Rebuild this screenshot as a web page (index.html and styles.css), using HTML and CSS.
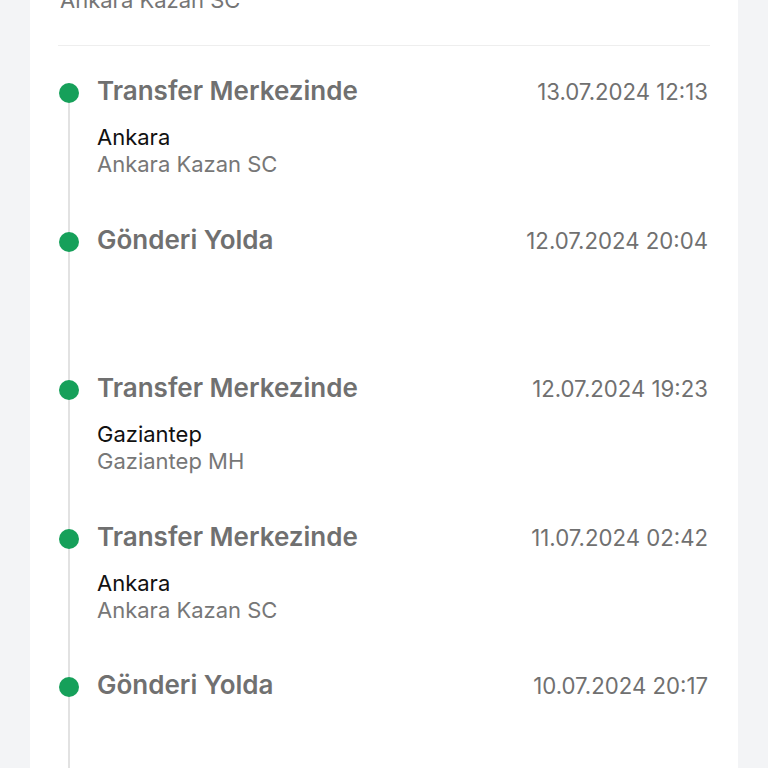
FILE: index.html
```html
<!DOCTYPE html>
<html>
<head>
<meta charset="utf-8">
<title>Gönderi Hareketleri</title>
<link rel="stylesheet" href="styles.css">
</head>
<body>
<div class="card">
  <div class="card-head">
    <div class="head-sub">Ankara Kazan SC</div>
  </div>

  <ul class="timeline">
    <li class="step">
      <span class="dot"></span>
      <div class="step-body">
        <div class="step-row">
          <span class="step-title">Transfer Merkezinde</span>
          <span class="step-date">13.07.2024 12:13</span>
        </div>
        <div class="step-city">Ankara</div>
        <div class="step-unit">Ankara Kazan SC</div>
      </div>
    </li>
    <li class="step">
      <span class="dot"></span>
      <div class="step-body">
        <div class="step-row">
          <span class="step-title">Gönderi Yolda</span>
          <span class="step-date">12.07.2024 20:04</span>
        </div>
      </div>
    </li>
    <li class="step">
      <span class="dot"></span>
      <div class="step-body">
        <div class="step-row">
          <span class="step-title">Transfer Merkezinde</span>
          <span class="step-date">12.07.2024 19:23</span>
        </div>
        <div class="step-city">Gaziantep</div>
        <div class="step-unit">Gaziantep MH</div>
      </div>
    </li>
    <li class="step">
      <span class="dot"></span>
      <div class="step-body">
        <div class="step-row">
          <span class="step-title">Transfer Merkezinde</span>
          <span class="step-date">11.07.2024 02:42</span>
        </div>
        <div class="step-city">Ankara</div>
        <div class="step-unit">Ankara Kazan SC</div>
      </div>
    </li>
    <li class="step">
      <span class="dot"></span>
      <div class="step-body">
        <div class="step-row">
          <span class="step-title">Gönderi Yolda</span>
          <span class="step-date">10.07.2024 20:17</span>
        </div>
      </div>
    </li>
  </ul>
</div>
</body>
</html>
```

FILE: styles.css
```css
body {
  margin: 0;
  background-color: #f3f4f6;
  font-family: Inter, "Noto Sans", sans-serif;
  color: #111;
  overflow: hidden;
}

.card {
  margin: -14px 30px 0;
  padding: 0 28px;
  background-color: white;
  min-height: 800px;
}

.card-head {
  border-bottom: 1px solid #eeeeee;
  padding: 0 0 31px 2px;
}

.head-sub {
  font-size: 22px;
  line-height: 28px;
  color: #757575;
}

.timeline {
  list-style: none;
  margin: 0;
  padding: 29px 0 0;
}

.step {
  position: relative;
  display: grid;
  grid-template-columns: 24px 1fr;
  column-gap: 15px;
  height: 148.5px;
}

/* connector between the dots */
.step::before {
  content: "";
  position: absolute;
  left: 10px;
  top: 18px;
  width: 2px;
  height: 148.5px;
  background-color: #e2e2e2;
}

.dot {
  position: relative;
  width: 20px;
  height: 20px;
  margin: 8px 0 0 1px;
  border-radius: 50%;
  background-color: #16a05a;
}

.step-row {
  display: flex;
  justify-content: space-between;
  align-items: baseline;
}

.step-title {
  font-size: 26px;
  line-height: 32px;
  font-weight: 600;
  color: #707070;
}

.step-date {
  font-size: 22.2px;
  line-height: 32px;
  color: #707070;
  margin-right: 2px;
}

.step-city {
  margin-top: 16px;
  font-size: 22px;
  line-height: 27px;
  color: #111;
}

.step-unit {
  font-size: 22px;
  line-height: 27px;
  color: #777;
}
```
